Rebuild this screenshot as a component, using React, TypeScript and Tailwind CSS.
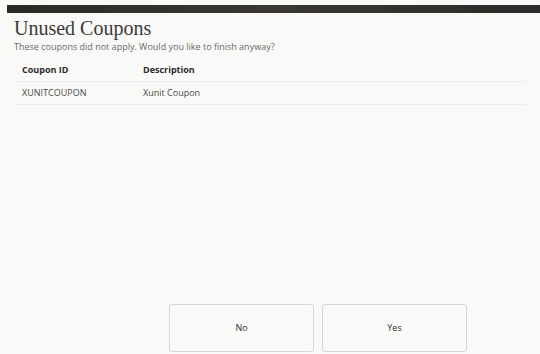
export default function App() {
  return (
    <div className="w-[540px] h-[354px] bg-[#f9f9f8] overflow-hidden flex flex-col font-['Open_Sans',sans-serif]">
      <div className="pt-[5px] pl-[7px]">
        <div className="h-[8px] bg-gradient-to-r from-[#2b2926] via-[#3a3734] to-[#2d2b29]" />
      </div>
      <div className="px-[14px]">
        <h1 className="mt-[3px] text-[20px] leading-[24px] text-[#3a3937] font-['Liberation_Serif',serif]">
          Unused Coupons
        </h1>
        <p className="text-[9px] leading-[14px] text-[#6a6966]">
          These coupons did not apply. Would you like to finish anyway?
        </p>
        <table className="mt-[4px] w-full text-[9px] text-[#2c2b29] border-collapse">
          <thead>
            <tr className="border-b border-[#efeeec] h-[23px]">
              <th className="w-[129px] pl-[8px] text-left font-bold">Coupon ID</th>
              <th className="text-left font-bold">Description</th>
            </tr>
          </thead>
          <tbody>
            <tr className="border-b border-[#efeeec] h-[23px]">
              <td className="pl-[8px] text-[#4a4946]">XUNITCOUPON</td>
              <td className="text-[#4a4946]">Xunit Coupon</td>
            </tr>
          </tbody>
        </table>
      </div>
      <div className="mt-auto mb-[2px] pl-[169px] flex gap-[8px]">
        <button className="w-[145px] h-[48px] rounded-[3px] border border-[#d9d8d6] bg-[#fafaf9] text-[9px] text-[#2f2e2c]">
          No
        </button>
        <button className="w-[145px] h-[48px] rounded-[3px] border border-[#d9d8d6] bg-[#fafaf9] text-[9px] text-[#2f2e2c]">
          Yes
        </button>
      </div>
    </div>
  );
}
